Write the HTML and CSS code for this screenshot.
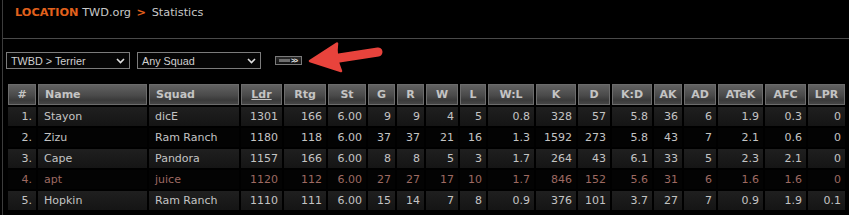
FILE: index.html
```html
<!DOCTYPE html>
<html>
<head>
<meta charset="utf-8">
<link rel="stylesheet" href="styles.css">
</head>
<body>
<div class="page">
  <div class="location">
    <span class="loc">LOCATION</span>
    <span class="crumb">TWD.org</span>
    <span class="sep">&gt;</span>
    <span class="crumb">Statistics</span>
  </div>
  <div class="controls">
    <div class="select s1"><span>TWBD &gt; Terrier</span>
      <svg class="chev" width="9" height="6" viewBox="0 0 9 6"><path d="M1 1 L4.5 4.5 L8 1" fill="none" stroke="#e0e0e0" stroke-width="1.6"/></svg>
    </div>
    <div class="select s2"><span>Any Squad</span>
      <svg class="chev" width="9" height="6" viewBox="0 0 9 6"><path d="M1 1 L4.5 4.5 L8 1" fill="none" stroke="#e0e0e0" stroke-width="1.6"/></svg>
    </div>
    <div class="gobtn"><span class="bar"></span><span class="go">&gt;&gt;</span></div>
    <svg class="arrow" width="80" height="36" viewBox="0 0 80 36">
      <line x1="34" y1="18" x2="73" y2="12" stroke="#e8433c" stroke-width="9" stroke-linecap="round"/>
      <path d="M5 21 L32 3.5 Q30 17 36 31 Z" fill="#e8433c" stroke="#e8433c" stroke-width="2.5" stroke-linejoin="round"/>
    </svg>
  </div>
  <table class="stats">
    <thead>
      <tr>
        <th class="w-n">#</th><th class="w-name left">Name</th><th class="w-squad left">Squad</th><th class="w-ldr"><u>Ldr</u></th>
        <th class="w-rtg">Rtg</th><th class="w-st">St</th><th class="w-g">G</th><th class="w-r">R</th><th class="w-w">W</th>
        <th class="w-l">L</th><th class="w-wl">W:L</th><th class="w-k">K</th><th class="w-d">D</th><th class="w-kd">K:D</th>
        <th class="w-ak">AK</th><th class="w-ad">AD</th><th class="w-atek">ATeK</th><th class="w-afc">AFC</th><th class="w-lpr">LPR</th>
      </tr>
    </thead>
    <tbody>
      <tr class="odd">
        <td class="num">1.</td><td class="txt">Stayon</td><td class="txt">dicE</td><td class="num">1301</td><td class="num">166</td><td class="num">6.00</td><td class="num">9</td><td class="num">9</td><td class="num">4</td><td class="num">5</td><td class="num">0.8</td><td class="num">328</td><td class="num">57</td><td class="num">5.8</td><td class="num">36</td><td class="num">6</td><td class="num">1.9</td><td class="num">0.3</td><td class="num">0</td>
      </tr>
      <tr class="even">
        <td class="num">2.</td><td class="txt">Zizu</td><td class="txt">Ram Ranch</td><td class="num">1180</td><td class="num">118</td><td class="num">6.00</td><td class="num">37</td><td class="num">37</td><td class="num">21</td><td class="num">16</td><td class="num">1.3</td><td class="num">1592</td><td class="num">273</td><td class="num">5.8</td><td class="num">43</td><td class="num">7</td><td class="num">2.1</td><td class="num">0.6</td><td class="num">0</td>
      </tr>
      <tr class="odd">
        <td class="num">3.</td><td class="txt">Cape</td><td class="txt">Pandora</td><td class="num">1157</td><td class="num">166</td><td class="num">6.00</td><td class="num">8</td><td class="num">8</td><td class="num">5</td><td class="num">3</td><td class="num">1.7</td><td class="num">264</td><td class="num">43</td><td class="num">6.1</td><td class="num">33</td><td class="num">5</td><td class="num">2.3</td><td class="num">2.1</td><td class="num">0</td>
      </tr>
      <tr class="even me">
        <td class="num">4.</td><td class="txt">apt</td><td class="txt">juice</td><td class="num">1120</td><td class="num">112</td><td class="num">6.00</td><td class="num">27</td><td class="num">27</td><td class="num">17</td><td class="num">10</td><td class="num">1.7</td><td class="num">846</td><td class="num">152</td><td class="num">5.6</td><td class="num">31</td><td class="num">6</td><td class="num">1.6</td><td class="num">1.6</td><td class="num">0</td>
      </tr>
      <tr class="odd">
        <td class="num">5.</td><td class="txt">Hopkin</td><td class="txt">Ram Ranch</td><td class="num">1110</td><td class="num">111</td><td class="num">6.00</td><td class="num">15</td><td class="num">14</td><td class="num">7</td><td class="num">8</td><td class="num">0.9</td><td class="num">376</td><td class="num">101</td><td class="num">3.7</td><td class="num">27</td><td class="num">7</td><td class="num">0.9</td><td class="num">1.9</td><td class="num">0.1</td>
      </tr>
    </tbody>
  </table>
</div>
</body>
</html>
```

FILE: styles.css
```css
html, body {
  margin: 0;
  padding: 0;
  background: #000;
}
body {
  font-family: "DejaVu Sans", Verdana, sans-serif;
  font-size: 11px;
  color: #c4c4c4;
  overflow: hidden;
}
.page {
  margin-left: 2px;
  border-left: 1px solid #3c3c3c;
  min-height: 215px;
}
.location {
  height: 39px;
  border-bottom: 1px solid #4a4a4a;
  box-sizing: border-box;
  padding: 6px 0 0 12px;
  font-size: 11.3px;
  line-height: 14px;
  color: #c8c8c8;
}
.loc {
  color: #e2611c;
  font-weight: bold;
}
.sep {
  color: #e2611c;
  font-weight: bold;
  margin: 0 2px;
}
.controls {
  position: relative;
  display: flex;
  align-items: flex-start;
  padding: 13px 0 0 3px;
  height: 30px;
  box-sizing: border-box;
}
.select {
  display: flex;
  align-items: center;
  justify-content: space-between;
  box-sizing: border-box;
  width: 124px;
  height: 17px;
  border: 1px solid #7c7c7c;
  padding: 0 4px 0 4px;
  font-family: "Liberation Sans", Arial, sans-serif;
  font-size: 10.8px;
  color: #d0d0d0;
  background: #050505;
}
.s2 {
  margin-left: 7px;
}
.chev {
  display: block;
}
.gobtn {
  margin: 4px 0 0 14px;
  box-sizing: border-box;
  width: 27px;
  height: 9px;
  border: 1px solid #7a7a7a;
  background: linear-gradient(#2a2a2a, #111);
  display: flex;
  align-items: center;
  padding: 0 0 0 3px;
}
.bar {
  width: 11px;
  height: 3px;
  background: #6e6e6e;
}
.go {
  font-family: "Liberation Sans", Arial, sans-serif;
  font-size: 7px;
  line-height: 7px;
  font-weight: bold;
  color: #f0f0f0;
  letter-spacing: -1px;
  margin-left: 1px;
}
.arrow {
  position: absolute;
  left: 302px;
  top: 1px;
}
.stats {
  margin: 13px 0 0 3px;
  border-collapse: separate;
  border-spacing: 2px;
  table-layout: fixed;
  width: 841px;
}
.stats th {
  box-sizing: border-box;
  height: 21px;
  padding: 0;
  border: 1px solid #6c6c6c;
  background: linear-gradient(#626262 0%, #4a4a4a 55%, #3a3a3a 80%, #454545 100%);
  color: #c4c4c4;
  font-weight: bold;
  text-align: center;
  vertical-align: middle;
  white-space: nowrap;
}
.stats th.left {
  text-align: left;
  padding-left: 6px;
}
.stats th u {
  text-decoration: underline;
}
.stats td {
  box-sizing: border-box;
  height: 19px;
  padding: 0 4px;
  vertical-align: middle;
  white-space: nowrap;
  overflow: hidden;
}
.stats td.num {
  text-align: right;
}
.stats td.txt {
  text-align: left;
  padding-left: 6px;
}
.stats tr.odd td {
  background: linear-gradient(#1f1f1f, #151515);
}
.stats tr.even td {
  background: #030303;
}
.stats tr.me td {
  color: #9e6a62;
}
.w-n { width: 28px; }
.w-name { width: 109px; }
.w-squad { width: 90px; }
.w-ldr { width: 41px; }
.w-rtg { width: 42px; }
.w-st { width: 38px; }
.w-g { width: 27px; }
.w-r { width: 27px; }
.w-w { width: 32px; }
.w-l { width: 26px; }
.w-wl { width: 46px; }
.w-k { width: 40px; }
.w-d { width: 32px; }
.w-kd { width: 40px; }
.w-ak { width: 28px; }
.w-ad { width: 32px; }
.w-atek { width: 45px; }
.w-afc { width: 41px; }
.w-lpr { width: 37px; }
```
